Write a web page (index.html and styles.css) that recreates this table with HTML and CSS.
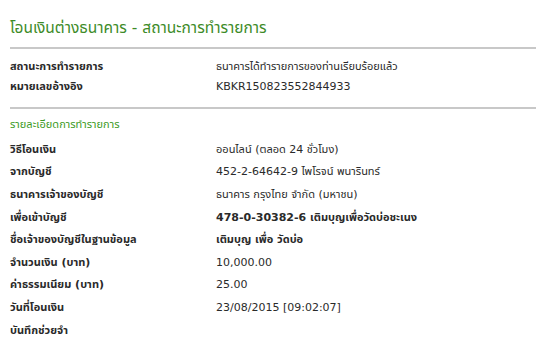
FILE: index.html
```html
<!DOCTYPE html>
<html lang="th">
<head>
<meta charset="utf-8">
<link rel="stylesheet" href="styles.css">
</head>
<body>
<div class="page">
  <h1 class="title">โอนเงินต่างธนาคาร - สถานะการทำรายการ</h1>
  <div class="summary">
    <div class="row"><div class="label">สถานะการทำรายการ</div><div class="value th">ธนาคารได้ทำรายการของท่านเรียบร้อยแล้ว</div></div>
    <div class="row"><div class="label">หมายเลขอ้างอิง</div><div class="value">KBKR150823552844933</div></div>
  </div>
  <h2 class="section">รายละเอียดการทำรายการ</h2>
  <div class="details">
    <div class="row"><div class="label">วิธีโอนเงิน</div><div class="value">ออนไลน์ (ตลอด 24 ชั่วโมง)</div></div>
    <div class="row"><div class="label">จากบัญชี</div><div class="value">452-2-64642-9 ไพโรจน์ พนารินทร์</div></div>
    <div class="row"><div class="label">ธนาคารเจ้าของบัญชี</div><div class="value th">ธนาคาร กรุงไทย จำกัด (มหาชน)</div></div>
    <div class="row"><div class="label">เพื่อเข้าบัญชี</div><div class="value bold">478-0-30382-6 เติมบุญเพื่อวัดบ่อชะเนง</div></div>
    <div class="row"><div class="label">ชื่อเจ้าของบัญชีในฐานข้อมูล</div><div class="value bold">เติมบุญ เพื่อ วัดบ่อ</div></div>
    <div class="row"><div class="label">จำนวนเงิน (บาท)</div><div class="value">10,000.00</div></div>
    <div class="row"><div class="label">ค่าธรรมเนียม (บาท)</div><div class="value">25.00</div></div>
    <div class="row"><div class="label">วันที่โอนเงิน</div><div class="value">23/08/2015 [09:02:07]</div></div>
    <div class="row"><div class="label">บันทึกช่วยจำ</div><div class="value"></div></div>
  </div>
</div>
</body>
</html>
```

FILE: styles.css
```css
html, body {
  margin: 0;
  padding: 0;
  background: #ffffff;
}
body {
  font-family: "DejaVu Sans", "Noto Sans Thai", Tahoma, sans-serif;
  font-size: 11px;
  color: #2a2a2a;
}
.page {
  padding: 16px 0 0 10px;
}
.title {
  margin: 0;
  font-size: 15.5px;
  font-weight: normal;
  color: #3d8b28;
  line-height: 24px;
  padding-bottom: 7px;
  border-bottom: 2px solid #c8c8c8;
}
.summary {
  padding: 7px 0 11px;
  border-bottom: 2px solid #c8c8c8;
}
.row {
  display: flex;
  align-items: center;
}
.summary .row {
  height: 20px;
}
.details .row {
  height: 22.6px;
}
.label {
  width: 206px;
  flex: none;
  font-weight: bold;
  color: #2a2a2a;
}
.value {
  color: #2a2a2a;
}
.value.bold {
  font-weight: bold;
}
.section {
  margin: 0;
  font-size: 11px;
  font-weight: normal;
  color: #3c9a24;
  line-height: 18px;
  padding: 7px 0 4px;
}
```
